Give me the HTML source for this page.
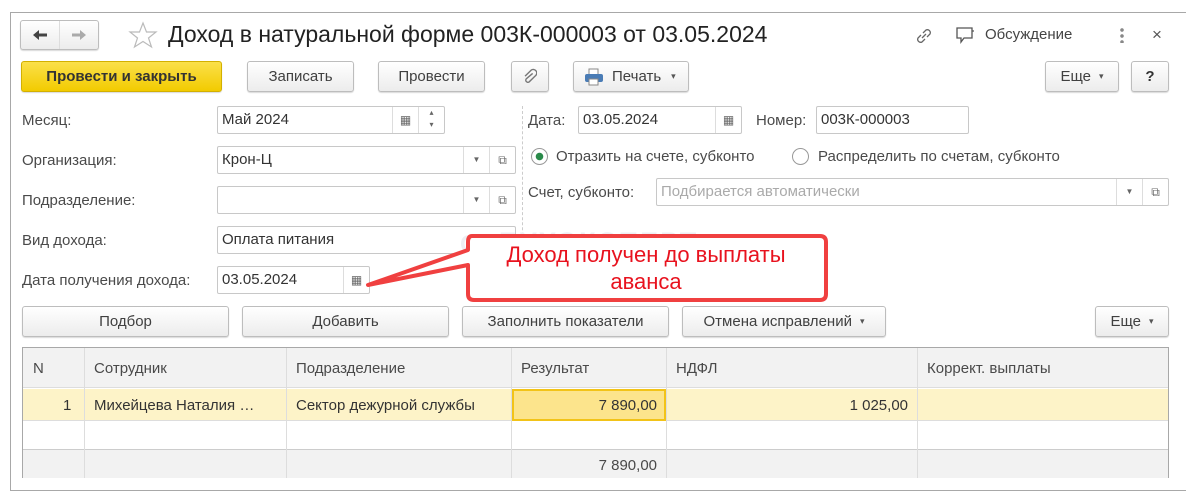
<!DOCTYPE html><html><head><meta charset="utf-8"><style>
*{box-sizing:border-box}body{margin:0;width:1186px;height:493px;background:#fff;font-family:"Liberation Sans",sans-serif;font-size:15px;color:#404040;position:relative;overflow:hidden}
.a{position:absolute}
.frame{left:10px;top:12px;width:1176px;height:479px;border:1px solid #a8a8a8;border-right:none}
.btn{position:absolute;height:31px;border:1px solid #bdbdbd;border-radius:3px;background:linear-gradient(#fff,#ececec);box-shadow:0 1px 1px rgba(0,0,0,.15);display:flex;align-items:center;justify-content:center;color:#404040;font-size:15px}
.lbl{position:absolute;font-size:15px;color:#4a4a4a}
.inp{position:absolute;height:28px;border:1px solid #c8c8c8;border-radius:2px;background:#fff;padding-left:4px;line-height:26px;color:#333;font-size:15px}
.dd{position:absolute;top:0;bottom:0;border-left:1px solid #ddd;width:26px;text-align:center;font-size:8px;color:#666}
.dr{font-size:9px;color:#555}
</style></head><body>
<div class="a frame"></div>
<div class="btn" style="left:20px;top:20px;width:79px;height:30px;padding:0"><span style="width:39px;height:28px;display:flex;align-items:center;justify-content:center"><svg width="16" height="12"><path d="M1 6 L7 1 V4.5 H15 V7.5 H7 V11 Z" fill="#444"/></svg></span><span style="border-left:1px solid #ddd;height:28px;width:40px;display:flex;align-items:center;justify-content:center"><svg width="16" height="12"><path d="M15 6 L9 1 V4.5 H1 V7.5 H9 V11 Z" fill="#aaa"/></svg></span></div>
<svg class="a" style="left:128px;top:21px" width="30" height="28"><polygon points="15,2 18.5,11 28,11 20.5,17 23.5,26 15,20.5 6.5,26 9.5,17 2,11 11.5,11" fill="none" stroke="#bbb" stroke-width="1.2"/></svg>
<div class="a" style="left:168px;top:21px;font-size:23px;color:#222">Доход в натуральной форме 003К-000003 от 03.05.2024</div>
<svg class="a" style="left:913px;top:25px" width="22" height="22"><path d="M9 13 L13 9 M8 10 L5 13 a3 3 0 0 0 4 4 L12 14 M10 8 L13 5 a3 3 0 0 1 4 4 L14 12" fill="none" stroke="#666" stroke-width="1.3"/></svg>
<svg class="a" style="left:955px;top:25px" width="22" height="22"><path d="M2 3 H17 V13 H9 L6 17 V13 H2 Z M17 6 H19" fill="none" stroke="#555" stroke-width="1.3"/></svg>
<div class="lbl" style="left:985px;top:26px;color:#444">Обсуждение</div>
<div class="a" style="left:1120px;top:27px;width:4px;height:16px;background:radial-gradient(circle,#888 1.6px,transparent 2px) 0 0/4px 6px"></div>
<div class="a" style="left:1152px;top:25px;font-size:17px;color:#555">×</div>
<div class="btn" style="left:21px;top:61px;width:201px;background:linear-gradient(#fbe04a,#f2cb00);border-color:#d3b000;font-weight:bold;color:#333">Провести и закрыть</div>
<div class="btn" style="left:247px;top:61px;width:107px">Записать</div>
<div class="btn" style="left:378px;top:61px;width:107px">Провести</div>
<div class="btn" style="left:511px;top:61px;width:38px"><svg width="14" height="18"><path d="M9 5 L4 11 a2 2 0 0 0 3 3 L12 7 a3.5 3.5 0 0 0 -5 -5 L2 9" fill="none" stroke="#777" stroke-width="1.4" transform="rotate(10 7 9)"/></svg></div>
<div class="btn" style="left:573px;top:61px;width:116px;justify-content:flex-start;padding-left:10px"><svg width="20" height="18"><rect x="5" y="1" width="9" height="6" fill="#fff" stroke="#888"/><rect x="1" y="6" width="18" height="8" rx="2" fill="#4a7cb5"/><rect x="5" y="11" width="9" height="6" fill="#fff" stroke="#888"/></svg><span style="margin-left:8px">Печать</span><span class="dr" style="margin-left:10px">▾</span></div>
<div class="btn" style="left:1045px;top:61px;width:74px">Еще <span class="dr" style="margin-left:8px">▾</span></div>
<div class="btn" style="left:1131px;top:61px;width:38px;font-weight:bold;color:#333">?</div>
<div class="lbl" style="left:22px;top:112px">Месяц:</div>
<div class="inp" style="left:217px;top:106px;width:228px">Май 2024<div class="dd" style="left:174px;width:26px;font-size:12px">▦</div><div class="dd" style="left:200px;line-height:12px;font-size:8px">▴<br>▾</div></div>
<div class="lbl" style="left:22px;top:152px">Организация:</div>
<div class="inp" style="left:217px;top:146px;width:299px">Крон-Ц<div class="dd" style="left:245px">▼</div><div class="dd" style="left:271px;font-size:12px">⧉</div></div>
<div class="lbl" style="left:22px;top:192px">Подразделение:</div>
<div class="inp" style="left:217px;top:186px;width:299px"><div class="dd" style="left:245px">▼</div><div class="dd" style="left:271px;font-size:12px">⧉</div></div>
<div class="lbl" style="left:22px;top:232px">Вид дохода:</div>
<div class="inp" style="left:217px;top:226px;width:299px">Оплата питания</div>
<div class="lbl" style="left:22px;top:272px">Дата получения дохода:</div>
<div class="inp" style="left:217px;top:266px;width:153px">03.05.2024<div class="dd" style="left:125px;font-size:12px">▦</div></div>
<div class="a" style="left:522px;top:106px;height:190px;border-left:1px dashed #ccc"></div>
<div class="lbl" style="left:528px;top:112px">Дата:</div>
<div class="inp" style="left:578px;top:106px;width:164px">03.05.2024<div class="dd" style="left:136px;font-size:12px">▦</div></div>
<div class="lbl" style="left:756px;top:112px">Номер:</div>
<div class="inp" style="left:816px;top:106px;width:153px">003К-000003</div>
<div class="a" style="left:531px;top:148px;width:17px;height:17px;border:1px solid #999;border-radius:50%;background:radial-gradient(circle,#2a8a4a 3.5px,#fff 4px)"></div>
<div class="lbl" style="left:556px;top:148px">Отразить на счете, субконто</div>
<div class="a" style="left:792px;top:148px;width:17px;height:17px;border:1px solid #999;border-radius:50%"></div>
<div class="lbl" style="left:818px;top:148px">Распределить по счетам, субконто</div>
<div class="lbl" style="left:528px;top:184px">Счет, субконто:</div>
<div class="inp" style="left:656px;top:178px;width:513px;color:#aaa">Подбирается автоматически<div class="dd" style="left:459px;color:#666">▼</div><div class="dd" style="left:485px;font-size:12px;color:#666">⧉</div></div>
<div class="a" style="left:460px;top:227px;font-size:27px;font-weight:bold;color:#eeeef2;letter-spacing:2px">ꝏ БУХЭКСПЕРТ</div>
<svg class="a" style="left:360px;top:228px" width="475" height="80"><path d="M112 8 Q108 8 108 14 V22 L8 57 L108 37 V66 Q108 72 114 72 H460 Q466 72 466 66 V14 Q466 8 460 8 Z" fill="#fff" stroke="#f04040" stroke-width="4" stroke-linejoin="round"/></svg>
<div class="a" style="left:470px;top:241px;width:352px;text-align:center;color:#e8121e;font-size:22px;line-height:27px">Доход получен до выплаты<br>аванса</div>
<div class="btn" style="left:22px;top:306px;width:207px">Подбор</div>
<div class="btn" style="left:242px;top:306px;width:207px">Добавить</div>
<div class="btn" style="left:462px;top:306px;width:207px">Заполнить показатели</div>
<div class="btn" style="left:682px;top:306px;width:204px">Отмена исправлений <span class="dr" style="margin-left:8px">▾</span></div>
<div class="btn" style="left:1095px;top:306px;width:74px">Еще <span class="dr" style="margin-left:8px">▾</span></div>
<div class="a" style="left:22px;top:347px;width:1147px;height:131px;border:1px solid #a8a8a8;background:#fff">
 <div class="a" style="left:0;top:0;width:1145px;height:40px;background:#f2f2f2;border-bottom:1px solid #ddd"></div>
 <div class="a" style="left:0;top:41px;width:1145px;height:32px;background:#fdf3c8;border-bottom:1px solid #ddd"></div>
 <div class="a" style="left:0;top:101px;width:1145px;height:29px;background:#f2f2f2;border-top:1px solid #ccc"></div>
 <div class="a" style="left:61px;top:0;height:130px;border-left:1px solid #ddd"></div>
 <div class="a" style="left:263px;top:0;height:130px;border-left:1px solid #ddd"></div>
 <div class="a" style="left:488px;top:0;height:130px;border-left:1px solid #ddd"></div>
 <div class="a" style="left:643px;top:0;height:130px;border-left:1px solid #ddd"></div>
 <div class="a" style="left:894px;top:0;height:130px;border-left:1px solid #ddd"></div>
 <div class="lbl" style="left:10px;top:12px">N</div>
 <div class="lbl" style="left:71px;top:12px">Сотрудник</div>
 <div class="lbl" style="left:273px;top:12px">Подразделение</div>
 <div class="lbl" style="left:498px;top:12px">Результат</div>
 <div class="lbl" style="left:653px;top:12px">НДФЛ</div>
 <div class="lbl" style="left:904px;top:12px">Коррект. выплаты</div>
 <div class="lbl" style="left:40px;top:49px;color:#333">1</div>
 <div class="lbl" style="left:71px;top:49px;color:#333">Михейцева Наталия …</div>
 <div class="lbl" style="left:273px;top:49px;color:#333">Сектор дежурной службы</div>
 <div class="a" style="left:489px;top:41px;width:154px;height:32px;background:#fce48c;border:2px solid #f2c318"></div>
 <div class="lbl" style="left:489px;top:49px;width:145px;text-align:right;color:#333">7 890,00</div>
 <div class="lbl" style="left:644px;top:49px;width:241px;text-align:right;color:#333">1 025,00</div>
 <div class="lbl" style="left:489px;top:109px;width:145px;text-align:right">7 890,00</div>
</div>
</body></html>
